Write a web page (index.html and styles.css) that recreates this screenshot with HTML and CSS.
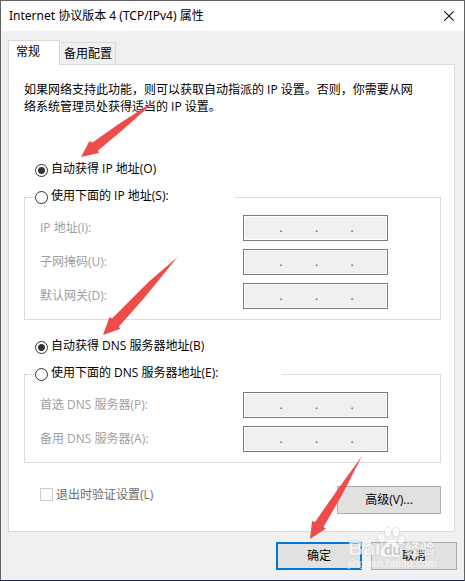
FILE: index.html
```html
<!DOCTYPE html>
<html lang="zh-CN">
<head>
<meta charset="utf-8">
<meta name="viewport" content="width=device-width, initial-scale=1">
<title>Internet 协议版本 4 (TCP/IPv4) 属性</title>
<link rel="stylesheet" href="styles.css">
</head>
<body>
<main class="dialog">
  <header class="titlebar">
    <h1 class="title">Internet 协议版本 4 (TCP/IPv4) 属性</h1>
    <button class="close" type="button" aria-label="关闭">
      <svg width="10" height="10" viewBox="0 0 10 10" aria-hidden="true"><path d="M0.3 0.3 9.7 9.7M9.7 0.3 0.3 9.7" stroke="#111" stroke-width="1.1" fill="none"/></svg>
    </button>
  </header>

  <form class="content">
    <div class="tabs" role="tablist">
      <button class="tab tab-active" type="button" role="tab" aria-selected="true">常规</button>
      <button class="tab" type="button" role="tab" aria-selected="false">备用配置</button>
    </div>

    <section class="panel">
      <p class="intro">如果网络支持此功能，则可以获取自动指派的 IP 设置。否则，你需要从网络系统管理员处获得适当的 IP 设置。</p>

      <label class="choice choice-ip"><input type="radio" name="ip" checked><span>自动获得 IP 地址(O)</span></label>
      <fieldset class="group">
        <legend class="legend"><label class="choice"><input type="radio" name="ip"><span>使用下面的 IP 地址(S):</span></label></legend>
        <div class="row">
          <label for="ip1">IP 地址(I):</label>
          <div class="address"><input id="ip1" disabled><span>.</span><input aria-label="IP 2" disabled><span>.</span><input aria-label="IP 3" disabled><span>.</span><input aria-label="IP 4" disabled></div>
        </div>
        <div class="row">
          <label for="mask1">子网掩码(U):</label>
          <div class="address"><input id="mask1" disabled><span>.</span><input aria-label="掩码 2" disabled><span>.</span><input aria-label="掩码 3" disabled><span>.</span><input aria-label="掩码 4" disabled></div>
        </div>
        <div class="row">
          <label for="gate1">默认网关(D):</label>
          <div class="address"><input id="gate1" disabled><span>.</span><input aria-label="网关 2" disabled><span>.</span><input aria-label="网关 3" disabled><span>.</span><input aria-label="网关 4" disabled></div>
        </div>
      </fieldset>

      <label class="choice choice-dns"><input type="radio" name="dns" checked><span>自动获得 DNS 服务器地址(B)</span></label>
      <fieldset class="group">
        <legend class="legend legend-wide"><label class="choice"><input type="radio" name="dns"><span>使用下面的 DNS 服务器地址(E):</span></label></legend>
        <div class="row">
          <label for="dns1">首选 DNS 服务器(P):</label>
          <div class="address"><input id="dns1" disabled><span>.</span><input aria-label="首选 2" disabled><span>.</span><input aria-label="首选 3" disabled><span>.</span><input aria-label="首选 4" disabled></div>
        </div>
        <div class="row">
          <label for="alt1">备用 DNS 服务器(A):</label>
          <div class="address"><input id="alt1" disabled><span>.</span><input aria-label="备用 2" disabled><span>.</span><input aria-label="备用 3" disabled><span>.</span><input aria-label="备用 4" disabled></div>
        </div>
      </fieldset>

      <div class="options">
        <label class="validate"><input type="checkbox" disabled><span>退出时验证设置(L)</span></label>
        <button class="button button-wide" type="button">高级(V)...</button>
      </div>
    </section>

    <footer class="actions">
      <button class="button button-default" type="submit">确定</button>
      <button class="button" type="button">取消</button>
    </footer>
  </form>

  <svg class="overlay" width="465" height="581" viewBox="0 0 465 581" aria-hidden="true">
    <g class="mark">
      <text class="mark-name" x="348" y="555">Bai</text>
      <ellipse cx="381.500" cy="538" rx="3.300" ry="4.500" transform="rotate(-18 381.500 538)"/>
      <ellipse cx="388" cy="532" rx="3.500" ry="4.800"/>
      <ellipse cx="396" cy="532" rx="3.500" ry="4.800" transform="rotate(10 396 532)"/>
      <ellipse cx="401.500" cy="540" rx="3.200" ry="4.500" transform="rotate(18 401.500 540)"/>
      <path d="M391.500 539c4 0 5 4.500 8 7 4 3.500 4.500 10-1 11-3 .5-4.500-.3-7-.3s-4 .8-7 .3c-5.500-1-5-7.500-1-11 3-2.500 4-7 8-7z"/>
      <text class="mark-du" x="384" y="555">du</text>
      <text class="mark-cn" x="405" y="554">经验</text>
      <text class="mark-url" x="348" y="567">jingyan.baidu.com</text>
    </g>
    <g fill="#ee4b4b">
      <path d="M157.500 99 118 124.500 92.500 142.500 89.500 141 81 157 99 153 98 150.500 122 130.500z"/>
      <path d="M177.500 257 149 281.500 112 318.500 109.500 317 103 335 120 329 119 326.500 145 297z"/>
      <path d="M362 456 338 489 315 522 312 521 310 539 326 528.500 323.500 527 342 495z"/>
    </g>
  </svg>
</main>
</body>
</html>
```
FILE: styles.css
```css
* {
  box-sizing: border-box;
}

body {
  margin: 0;
  background: #f0f0f0;
  color: #000;
  font: 12px/16px "Open Sans", "Noto Sans CJK SC", sans-serif;
}

button,
input {
  font: inherit;
  color: inherit;
}

.dialog {
  position: relative;
  min-height: 100vh;
  border: 1px solid #636363;
  border-bottom-color: #24284a;
  overflow: hidden;
}

.titlebar {
  display: flex;
  align-items: center;
  justify-content: space-between;
  height: 30px;
  padding: 0 10px 0 8px;
  background: #fff;
}

.title {
  margin: 0;
  font-family: "Noto Sans", "Noto Sans CJK SC", sans-serif;
  font-size: 12px;
  font-weight: 400;
}

.close {
  display: flex;
  padding: 0;
  border: 0;
  background: none;
}

.content {
  padding: 9px 7px 10px;
}

.tabs {
  display: flex;
  align-items: flex-end;
}

.tab {
  height: 22px;
  padding: 0 3px 0 4px;
  border: 1px solid #d9d9d9;
  border-width: 1px 1px 0 0;
  background: #f0f0f0;
}

.tab-active {
  position: relative;
  height: 25px;
  width: 52px;
  margin-bottom: -1px;
  padding: 0 0 2px 7px;
  border-width: 1px 1px 0 1px;
  background: #fff;
  text-align: left;
}

.panel {
  margin-right: 2px;
  padding: 16px 13px 17px 15px;
  border: 1px solid #d9d9d9;
  background: #fff;
}

.intro {
  margin: 0;
  padding-right: 20px;
  line-height: 17px;
}

.choice {
  display: flex;
  align-items: center;
  gap: 3px;
  height: 20px;
}

.choice span {
  padding-bottom: 3px;
}

.choice-ip {
  margin: 45px 0 7px 11px;
}

.choice-dns {
  margin: 17px 0 7px 11px;
}

.choice input {
  appearance: none;
  width: 13px;
  height: 13px;
  margin: 0;
  border: 1px solid #333;
  border-radius: 50%;
  background: #fff;
}

.choice input:checked {
  background: radial-gradient(circle, #333 3px, #fff 4px);
}

.group {
  display: grid;
  gap: 8px;
  margin: 0;
  padding: 8px 52px 10px 15px;
  border: 1px solid #dcdcdc;
}

.legend {
  width: 200px;
  margin-left: -5px;
  padding: 0;
}

.legend-wide {
  width: 247px;
}

.row {
  display: flex;
  align-items: center;
  justify-content: space-between;
  height: 26px;
  color: #a0a0a0;
}

.address {
  display: flex;
  align-items: center;
  width: 145px;
  height: 26px;
  padding: 0 1px 0 3px;
  border: 1px solid #7a7a7a;
  outline: 1px solid #fff;
  outline-offset: -2px;
  background: #f0f0f0;
  color: #555;
}

.address input {
  flex: 1;
  min-width: 0;
  height: 16px;
  padding: 0;
  border: 0;
  background: none;
  text-align: center;
}

.address span {
  width: 3px;
}

.options {
  display: flex;
  justify-content: space-between;
  margin-top: 23px;
  padding-left: 16px;
}

.validate {
  display: flex;
  align-items: center;
  gap: 3px;
  height: 17px;
  color: #6d6d6d;
}

.validate input {
  appearance: none;
  width: 13px;
  height: 13px;
  margin: 0;
  border: 1px solid #ccc;
  background: #fff;
}

.button {
  width: 86px;
  height: 28px;
  padding: 0;
  border: 1px solid #adadad;
  background: #e1e1e1;
}

.button-wide {
  width: 104px;
}

.button-default {
  border: 2px solid #0078d7;
}

.actions {
  display: flex;
  justify-content: flex-end;
  gap: 9px;
  margin-top: 10px;
}

.overlay {
  position: absolute;
  top: -1px;
  left: -1px;
  pointer-events: none;
}

.mark {
  fill: #fff;
  fill-opacity: 0.7;
  stroke: #b8b8b8;
  stroke-opacity: 0.5;
  stroke-width: 1px;
  paint-order: stroke;
  font-family: "Liberation Sans", "Noto Sans CJK SC", sans-serif;
}

.mark-name {
  font-size: 21px;
  font-weight: 700;
}

.mark-du {
  fill: #b4b4b4;
  stroke: none;
  font-size: 14px;
  font-weight: 700;
}

.mark-cn {
  font-size: 15px;
  font-weight: 700;
}

.mark-url {
  stroke: none;
  font-size: 11px;
}
```
